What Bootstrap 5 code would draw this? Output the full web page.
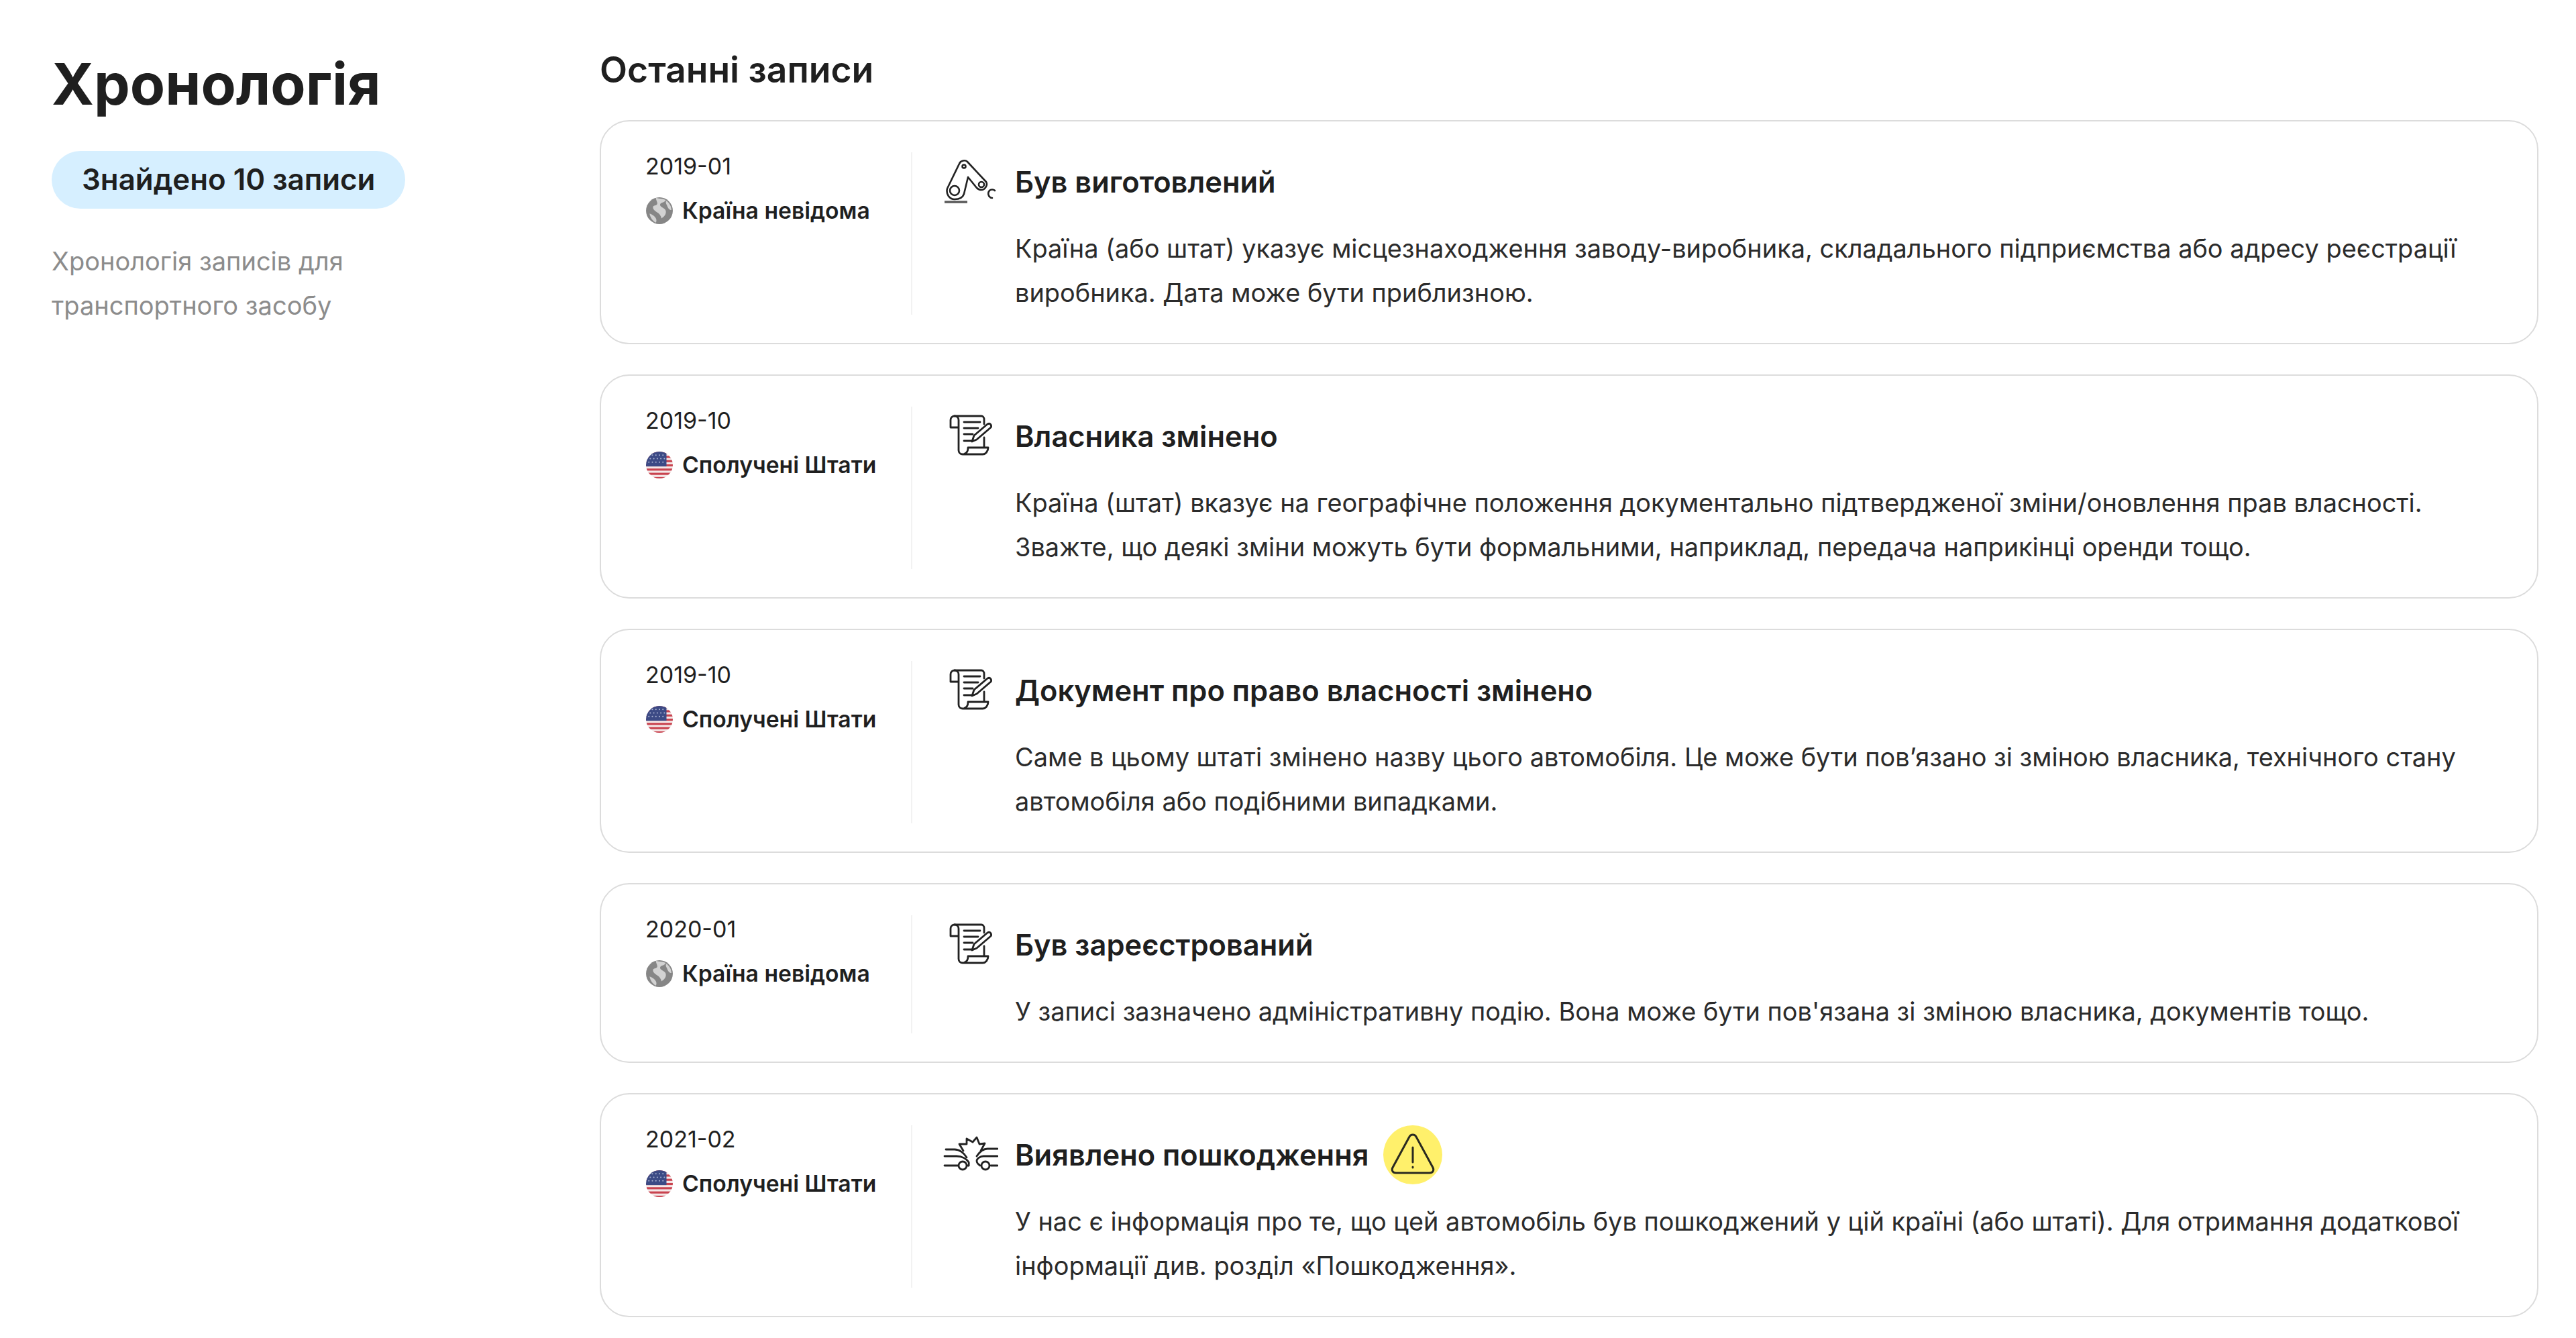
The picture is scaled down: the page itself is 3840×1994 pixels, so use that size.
<!DOCTYPE html>
<html lang="uk">
<head>
  <meta charset="UTF-8">
  <title>Хронологія</title>
  <link href="https://cdn.jsdelivr.net/npm/bootstrap@5.3.0/dist/css/bootstrap.min.css" rel="stylesheet">
  <style>
    body {
      font-family: Inter, "Noto Sans", sans-serif;
      color: #1f1f1f;
      background: #fff;
    }
    .page-wrap { padding: 73px 56px 0 77px; }
    .side-col { width: 817px; flex: none; }
    .side-title { font-size: 85.4px; font-weight: 700; line-height: 104px; margin: 0 0 48px; }
    .found-pill {
      display: inline-block;
      background: #d6efff;
      border-radius: 43px;
      height: 86px;
      line-height: 86px;
      padding: 0 45px;
      font-size: 43.8px;
      font-weight: 600;
    }
    .side-note { width: 560px; margin: 45px 0 0; font-size: 38px; line-height: 66px; color: #8c8c8c; }
    .main-title { font-size: 53.4px; font-weight: 600; line-height: 62px; margin: 0 0 44px; }
    .rec-list { gap: 45px; }
    .rec-card {
      border: 2px solid #dcdcdc;
      border-radius: 44px;
      padding: 46px 100px 42px 66px;
    }
    .rec-left { width: 398px; flex: none; border-right: 2px solid #f2f2f2; }
    .rec-date { font-size: 34px; line-height: 42px; margin-bottom: 24px; }
    .rec-place { font-size: 33.7px; line-height: 42px; font-weight: 600; gap: 13px; white-space: nowrap; }
    .flag-ico { width: 42px; height: 42px; flex: none; }
    .rec-body { padding-left: 46px; }
    .rec-head { min-height: 88px; margin-bottom: 22px; }
    .type-ico { width: 82px; height: 82px; flex: none; margin-right: 25px; color: #222; }
    .rec-name { font-size: 43.4px; font-weight: 600; margin: 0; }
    .warn-badge {
      width: 88px; height: 88px; flex: none;
      border-radius: 50%;
      background: #fff06b;
      margin-left: 22px;
    }
    .warn-badge svg { width: 72px; height: 72px; }
    .rec-text { font-size: 37.9px; line-height: 66px; margin: 0 0 0 107px; color: #2b2b2b; }
  </style>
</head>
<body>
  <svg width="0" height="0" class="d-block">
    <defs>
      <clipPath id="flagClip"><circle cx="20" cy="20" r="19"/></clipPath>
      <symbol id="ico-globe" viewBox="0 0 40 40">
        <circle cx="20" cy="20" r="19" fill="#868686"/>
        <path d="M15 2c5 1 11 1 14 3-2 4-7 3-8 6-1 4 7 5 8 9 1 5-2 8-6 11-1-4-3-7-7-9-2-2-6-4-5-8 2-2 5-1 6-4 0-3-2-5-2-8z" fill="#d2d2d2"/>
        <path d="M30 6c4 3 7 8 7 13-3 0-5-3-6-6-1-2-3-5-1-7zM6 24c3 1 7 3 9 7 1 2 1 4 0 6-4-2-8-7-9-13z" fill="#d2d2d2"/>
      </symbol>
      <symbol id="ico-flag" viewBox="0 0 40 40">
        <g clip-path="url(#flagClip)">
          <rect width="40" height="40" fill="#f4e9e9"/>
          <rect y="1" width="40" height="3" fill="#c9434f"/>
          <rect y="7" width="40" height="3" fill="#c9434f"/>
          <rect y="13" width="40" height="3" fill="#c9434f"/>
          <rect y="19" width="40" height="3" fill="#c9434f"/>
          <rect y="25" width="40" height="3" fill="#c9434f"/>
          <rect y="31" width="40" height="3" fill="#c9434f"/>
          <rect y="37" width="40" height="3" fill="#c9434f"/>
          <rect width="30" height="22" fill="#3c4a85"/>
          <g fill="#aab2d2">
            <circle cx="10" cy="6" r="1"/><circle cx="15" cy="6" r="1"/><circle cx="20" cy="6" r="1"/><circle cx="25" cy="6" r="1"/>
            <circle cx="7" cy="11" r="1"/><circle cx="12" cy="11" r="1"/><circle cx="17" cy="11" r="1"/><circle cx="22" cy="11" r="1"/><circle cx="27" cy="11" r="1"/>
            <circle cx="5" cy="16" r="1"/><circle cx="10" cy="16" r="1"/><circle cx="15" cy="16" r="1"/><circle cx="20" cy="16" r="1"/><circle cx="25" cy="16" r="1"/>
          </g>
        </g>
      </symbol>
      <symbol id="ico-robot" viewBox="0 0 82 82">
        <g fill="none" stroke="currentColor" stroke-width="2.6" stroke-linecap="round" stroke-linejoin="round">
          <path d="M24 14C26 9 33 8 36 11L64 41C67 46 62 53 57 53C54 53 52 52 50 50L37 34L31 59C29 65 23 67 17 67C9 67 4 59 6 51Z"/>
          <circle cx="31" cy="18" r="2.5"/>
          <circle cx="17" cy="54" r="7"/>
          <circle cx="57" cy="45" r="4"/>
          <path d="M77 54c-2-2-6-2-8 0-3 3-2 8 1 10 1 1 2 1 3 1"/>
        </g>
        <path d="M2 71h34" stroke="currentColor" stroke-width="3.4" opacity=".75"/>
      </symbol>
      <symbol id="ico-scroll" viewBox="0 0 82 82">
        <g fill="none" stroke="currentColor" stroke-width="2.8" stroke-linecap="round" stroke-linejoin="round">
          <path d="M23 28H11V17c0-4 3-6 6-6s6 2 6 6v45c0 4 3 6 6 6h30c4 0 8-4 8-10H37c0 5-1 8-5 9"/>
          <path d="M17 11h40c2 0 4 2 4 5v7M61 43v14"/>
          <path d="M31 20h24M31 29h21M31 38h13M31 48h13"/>
          <path d="M43 49l3-9L66 23c2-1 4-1 5 1s1 3 0 4L50 46z"/>
        </g>
      </symbol>
      <symbol id="ico-crash" viewBox="0 0 82 82">
        <g fill="none" stroke="currentColor" stroke-width="2.8" stroke-linecap="round" stroke-linejoin="round">
          <path d="M30 35L24 25H35V17L44 22L50 15L54 25L62 24L56 35"/>
          <path d="M4 33H17C24 33 31 38 35 45"/>
          <path d="M2 43H20C28 43 35 47 38 52 39 54 38 56 38 57"/>
          <path d="M81 32H66C60 32 54 37 50 43"/>
          <path d="M81 43H60C55 43 50 47 50 50 50 53 52 55 55 57"/>
          <path d="M2 57H22M36 57h2M71 57H81"/>
          <circle cx="29" cy="57" r="6"/>
          <circle cx="63" cy="57" r="6"/>
        </g>
      </symbol>
    </defs>
  </svg>

  <div class="page-wrap d-flex">
    <div class="side-col">
      <h1 class="side-title">Хронологія</h1>
      <span class="found-pill">Знайдено 10 записи</span>
      <p class="side-note">Хронологія записів для транспортного засобу</p>
    </div>
    <div class="flex-grow-1">
      <h2 class="main-title">Останні записи</h2>
      <div class="rec-list d-flex flex-column">

        <div class="rec-card d-flex">
          <div class="rec-left">
            <div class="rec-date">2019-01</div>
            <div class="rec-place d-flex align-items-center"><svg class="flag-ico"><use href="#ico-globe"/></svg>Країна невідома</div>
          </div>
          <div class="rec-body flex-grow-1">
            <div class="rec-head d-flex align-items-center">
              <svg class="type-ico"><use href="#ico-robot"/></svg>
              <h3 class="rec-name">Був виготовлений</h3>
            </div>
            <p class="rec-text">Країна (або штат) указує місцезнаходження заводу-виробника, складального підприємства або адресу реєстрації виробника. Дата може бути приблизною.</p>
          </div>
        </div>

        <div class="rec-card d-flex">
          <div class="rec-left">
            <div class="rec-date">2019-10</div>
            <div class="rec-place d-flex align-items-center"><svg class="flag-ico"><use href="#ico-flag"/></svg>Сполучені Штати</div>
          </div>
          <div class="rec-body flex-grow-1">
            <div class="rec-head d-flex align-items-center">
              <svg class="type-ico"><use href="#ico-scroll"/></svg>
              <h3 class="rec-name">Власника змінено</h3>
            </div>
            <p class="rec-text">Країна (штат) вказує на географічне положення документально підтвердженої зміни/оновлення прав власності. Зважте, що деякі зміни можуть бути формальними, наприклад, передача наприкінці оренди тощо.</p>
          </div>
        </div>

        <div class="rec-card d-flex">
          <div class="rec-left">
            <div class="rec-date">2019-10</div>
            <div class="rec-place d-flex align-items-center"><svg class="flag-ico"><use href="#ico-flag"/></svg>Сполучені Штати</div>
          </div>
          <div class="rec-body flex-grow-1">
            <div class="rec-head d-flex align-items-center">
              <svg class="type-ico"><use href="#ico-scroll"/></svg>
              <h3 class="rec-name">Документ про право власності змінено</h3>
            </div>
            <p class="rec-text">Саме в цьому штаті змінено назву цього автомобіля. Це може бути пов’язано зі зміною власника, технічного стану автомобіля або подібними випадками.</p>
          </div>
        </div>

        <div class="rec-card d-flex">
          <div class="rec-left">
            <div class="rec-date">2020-01</div>
            <div class="rec-place d-flex align-items-center"><svg class="flag-ico"><use href="#ico-globe"/></svg>Країна невідома</div>
          </div>
          <div class="rec-body flex-grow-1">
            <div class="rec-head d-flex align-items-center">
              <svg class="type-ico"><use href="#ico-scroll"/></svg>
              <h3 class="rec-name">Був зареєстрований</h3>
            </div>
            <p class="rec-text">У записі зазначено адміністративну подію. Вона може бути пов'язана зі зміною власника, документів тощо.</p>
          </div>
        </div>

        <div class="rec-card d-flex">
          <div class="rec-left">
            <div class="rec-date">2021-02</div>
            <div class="rec-place d-flex align-items-center"><svg class="flag-ico"><use href="#ico-flag"/></svg>Сполучені Штати</div>
          </div>
          <div class="rec-body flex-grow-1">
            <div class="rec-head d-flex align-items-center">
              <svg class="type-ico"><use href="#ico-crash"/></svg>
              <h3 class="rec-name">Виявлено пошкодження</h3>
              <span class="warn-badge d-flex align-items-center justify-content-center">
                <svg viewBox="0 0 72 72" fill="none" stroke="#2a2a20" stroke-width="3" stroke-linecap="round" stroke-linejoin="round">
                  <path d="M31 9c2-4 8-4 10 0l25 46c2 4 0 8-5 8H11c-5 0-7-4-5-8z"/>
                  <path d="M36 25v22M36 54v1"/>
                </svg>
              </span>
            </div>
            <p class="rec-text">У нас є інформація про те, що цей автомобіль був пошкоджений у цій країні (або штаті). Для отримання додаткової інформації див. розділ «Пошкодження».</p>
          </div>
        </div>

      </div>
    </div>
  </div>
  <script src="https://cdn.jsdelivr.net/npm/bootstrap@5.3.0/dist/js/bootstrap.bundle.min.js"></script>
</body>
</html>
